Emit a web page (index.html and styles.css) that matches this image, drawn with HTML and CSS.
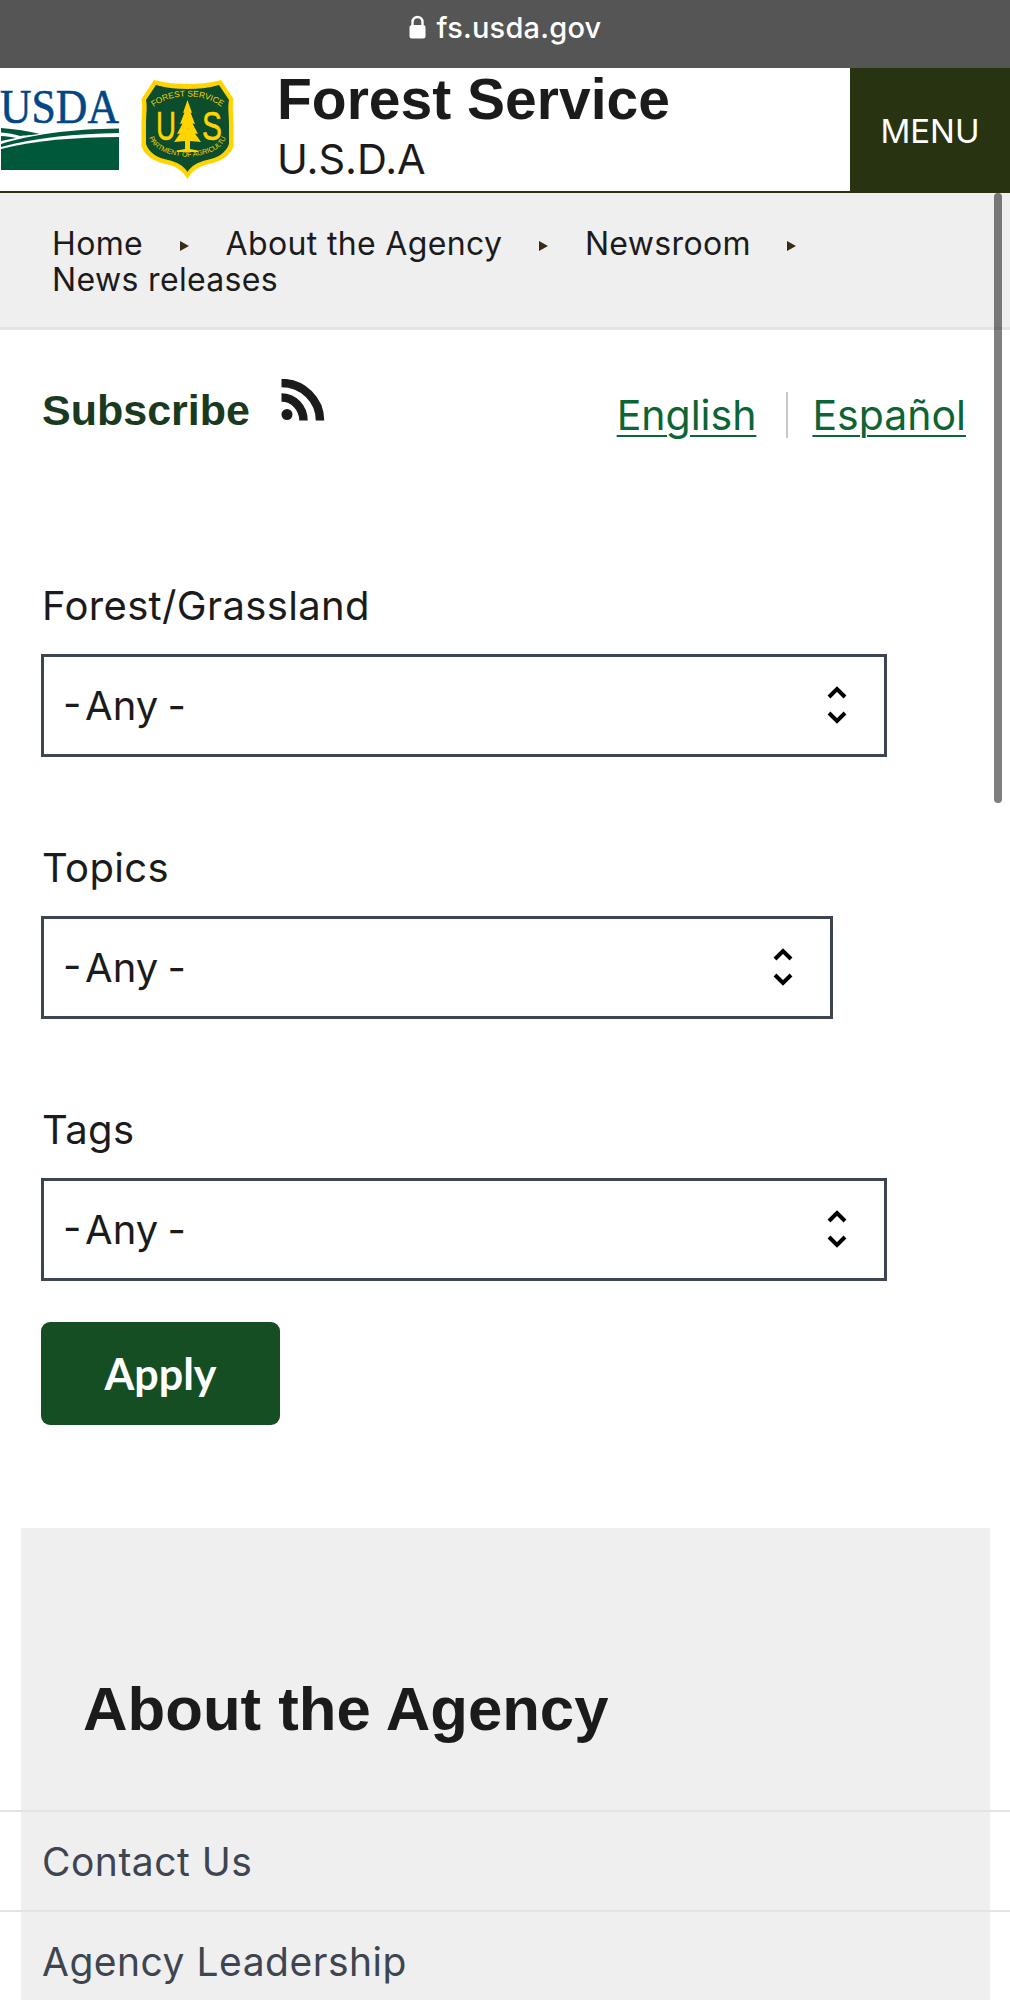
FILE: index.html
```html
<!DOCTYPE html>
<html lang="en">
<head>
<meta charset="utf-8">
<title>News releases | US Forest Service</title>
<link rel="stylesheet" href="styles.css">
</head>
<body>
<div class="page">
  <div class="urlbar">
    <svg class="lock" viewBox="0 0 17 24" aria-hidden="true"><path d="M3.5 11V7a5 5 0 0 1 10 0v4" fill="none" stroke="#fff" stroke-width="2.4"/><rect x="0.5" y="10" width="16" height="13.5" rx="2.5" fill="#fff"/></svg>
    <span>fs.usda.gov</span>
  </div>

  <header class="site-header">
    <svg class="usda" viewBox="0 0 120 82" aria-label="USDA">
      <text x="0" y="35" class="usda-text" textLength="119" lengthAdjust="spacingAndGlyphs">USDA</text>
      <path fill="#00583a" d="M1 61C35 52 75 49.5 119 49V82H1Z"/>
      <path fill="#00583a" d="M119 40.5V45C75 45.5 35 50 1 59V56C30 47 70 41 119 40.5Z"/>
      <path fill="#00583a" d="M1 40C15 41 28 43 40 46C30 47 25 47.5 20 48C14 46 8 45 1 44.5Z"/>
      <path fill="#00583a" d="M1 48C6 48 12 49 16 50C11 51 6 52 1 53Z"/>
    </svg>
    <svg class="shield" viewBox="0 0 93 99" aria-label="Forest Service shield">
      <path fill="#ffd400" d="M13 0C25 3 36 4 46.500 4C57 4 68 3 80 0L92.500 19C91 24 92.500 35 92.500 45C92.500 52 92.500 60 92.500 66C90 75 80 82 68 84C58 86 51 91 46.500 99C42 91 35 86 25 84C13 82 3 75 .5 66C.5 60 .5 52 .5 45C.5 35 2 24 .5 19Z"/>
      <path fill="#0b4d2c" d="M15 5C26 8 36 9 46.500 9C57 9 67 8 78 5L88 20C86.500 26 88 36 88 45C88 52 88 59 88 64C85 73 76 78 66 80C57 82 50 86 46.500 92C43 86 36 82 27 80C17 78 8 73 5 64C5 59 5 52 5 45C5 36 6.500 26 5 20Z"/>
      <defs>
        <path id="arc-top" d="M10 29C22 19 34 16.500 46.500 16.500C59 16.500 71 19 83 29"/>
        <path id="arc-bottom" d="M8 56C10 68 24 75 46.500 77C69 75 83 68 85 56" />
      </defs>
      <text class="sh-small"><textPath href="#arc-top" startOffset="50%" text-anchor="middle">FOREST SERVICE</textPath></text>
      <text class="sh-tiny"><textPath href="#arc-bottom" startOffset="50%" text-anchor="middle">DEPARTMENT OF AGRICULTURE</textPath></text>
      <text x="15" y="60" class="sh-big" textLength="20" lengthAdjust="spacingAndGlyphs">U</text>
      <text x="61" y="60" class="sh-big" textLength="20" lengthAdjust="spacingAndGlyphs">S</text>
      <path fill="#ffd400" d="M46.500 20L51 33L49.500 32.500L54 44L51.500 43.500L57 54L54 53.500L60 62L49 61V69L57 70.500V72H36V70.500L44 69V61L33 62L39 53.500L36 54L41.500 43.500L39 44L43.500 32.500L42 33Z"/>
    </svg>
    <div class="brand">
      <div class="brand-name">Forest Service</div>
      <div class="brand-sub">U.S.D.A</div>
    </div>
    <button class="menu-btn" type="button">MENU</button>
  </header>

  <nav class="crumbs" aria-label="Breadcrumb">
    <a href="#">Home</a><i class="tri"></i>
    <a href="#">About the Agency</a><i class="tri"></i>
    <a href="#">Newsroom</a><i class="tri"></i>
    <a href="#">News releases</a>
  </nav>

  <main class="content">
    <div class="topline">
      <div class="subscribe">
        <span>Subscribe</span>
        <svg class="rss" viewBox="0 0 44 44" aria-hidden="true">
          <circle cx="6" cy="35.500" r="5.500" fill="#1b1b1b"/>
          <path d="M.5 18.500A22 23 0 0 1 22.500 41.500" fill="none" stroke="#1b1b1b" stroke-width="8.500"/>
          <path d="M.5 4A38.500 37.500 0 0 1 39 41.500" fill="none" stroke="#1b1b1b" stroke-width="8.500"/>
        </svg>
      </div>
      <div class="langs">
        <a href="#">English</a>
        <a href="#">Español</a>
      </div>
    </div>

    <form class="filters">
      <div class="field">
        <label for="f1">Forest/Grassland</label>
        <div class="select wide">
          <select id="f1"><option>-&#8202;Any -</option></select>
          <svg class="chev" viewBox="0 0 20 38" aria-hidden="true"><path d="M2 11L10 3L18 11M2 27L10 35L18 27" fill="none" stroke="#000" stroke-width="4"/></svg>
        </div>
      </div>
      <div class="field">
        <label for="f2">Topics</label>
        <div class="select narrow">
          <select id="f2"><option>-&#8202;Any -</option></select>
          <svg class="chev" viewBox="0 0 20 38" aria-hidden="true"><path d="M2 11L10 3L18 11M2 27L10 35L18 27" fill="none" stroke="#000" stroke-width="4"/></svg>
        </div>
      </div>
      <div class="field">
        <label for="f3">Tags</label>
        <div class="select wide">
          <select id="f3"><option>-&#8202;Any -</option></select>
          <svg class="chev" viewBox="0 0 20 38" aria-hidden="true"><path d="M2 11L10 3L18 11M2 27L10 35L18 27" fill="none" stroke="#000" stroke-width="4"/></svg>
        </div>
      </div>
      <button class="apply" type="button">Apply</button>
    </form>
  </main>

  <aside class="side">
    <div class="side-panel">
      <h2>About the Agency</h2>
    </div>
    <ul class="side-list">
      <li><a href="#">Contact Us</a></li>
      <li><a href="#">Agency Leadership</a></li>
    </ul>
  </aside>

  <div class="scrollthumb"></div>
</div>
</body>
</html>
```
FILE: styles.css
```css
* { box-sizing: border-box; }
html, body { margin: 0; padding: 0; background: #fff; }
body { font-family: "Inter", "Liberation Sans", sans-serif; color: #1b1b1b; }
a { color: inherit; text-decoration: none; }

.page { position: relative; width: 1010px; height: 2000px; overflow: hidden; }

.urlbar {
  height: 68px; background: #555; color: #fff;
  display: flex; justify-content: center; align-items: flex-start; gap: 11px;
  padding-top: 11px;
  font-size: 29px; line-height: 33px; font-weight: 500; letter-spacing: .2px;
}
.lock { width: 17px; height: 24px; margin-top: 4px; }

.site-header {
  height: 125px; display: flex; align-items: flex-start;
  border-bottom: 2px solid #283311; background: #fff;
}
.usda { width: 120px; height: 82px; margin-top: 20px; flex: none; overflow: visible; }
.usda-text { font-family: "Liberation Serif", serif; font-size: 49px; fill: #004785; stroke: #004785; stroke-width: .6px; }
.shield { width: 93px; height: 99px; margin: 12px 0 0 21px; flex: none; overflow: visible; }
.sh-small { font-family: "Liberation Sans", sans-serif; font-size: 8.400px; fill: #ffd400; }
.sh-tiny { font-family: "Liberation Sans", sans-serif; font-size: 7px; fill: #ffd400; }
.sh-big { font-family: "Liberation Sans", sans-serif; font-size: 40px; fill: #ffd400; stroke: #ffd400; stroke-width: .6px; }
.brand { margin-left: 43px; flex: 1; }
.brand-name { font-family: "Liberation Sans", sans-serif; font-weight: 700; font-size: 57px; line-height: 62px; color: #1b1b1b; }
.brand-sub { font-size: 41.500px; line-height: 54px; margin-top: 2px; }
.menu-btn {
  width: 160px; height: 125px; flex: none; border: 0; background: #283311; color: #fff;
  font-family: inherit; font-size: 33px; padding: 0; margin: 0;
}

.crumbs {
  height: 137px; background: #efefef; border-bottom: 3px solid #e2e4e6;
  padding: 33px 0 0 52px;
  display: flex; flex-wrap: wrap; align-items: center; align-content: flex-start;
  font-size: 32px; line-height: 36px; letter-spacing: .35px;
}
.tri {
  width: 0; height: 0; margin: 3px 37px 0 36.500px;
  border-left: 9px solid #3b2a14; border-top: 5px solid transparent; border-bottom: 5px solid transparent;
}

.content { padding: 50px 44px 0 41px; }
.topline { display: flex; justify-content: space-between; align-items: flex-start; height: 204px; }
.subscribe { display: flex; align-items: flex-start; gap: 31px; padding-left: 1px; }
.subscribe span { font-family: "Liberation Sans", sans-serif; font-weight: 700; font-size: 43px; line-height: 50px; color: #1a3a1f; margin-top: 5px; }
.rss { width: 44px; height: 44px; margin-top: -1px; }
.langs { display: flex; font-size: 41px; line-height: 46px; color: #0b6535; padding-top: 12px; }
.langs a { text-decoration: underline; text-decoration-thickness: 2px; text-underline-offset: 5px; }
.langs a:first-child { padding-right: 30px; margin-right: 24px; border-right: 2px solid #c9c9c9; }

.field { margin-bottom: 89px; }
.field:nth-last-child(2) { margin-bottom: 41px; }
.field label { display: block; font-size: 40px; line-height: 44px; letter-spacing: .35px; margin-bottom: 26px; padding-left: 1px; }
.select { position: relative; height: 103px; }
.select.wide { width: 846px; }
.select.narrow { width: 792px; }
.select select {
  appearance: none; -webkit-appearance: none; width: 100%; height: 100%;
  border: 3px solid #3d4551; border-radius: 0; background: #fff; color: #1b1b1b;
  font-family: inherit; font-size: 40px; word-spacing: -2px; padding: 0 0 0 19px; margin: 0;
}
.chev { position: absolute; right: 40px; top: 32px; width: 20px; height: 38px; }

.apply {
  display: block; width: 239px; height: 103px;
  border: 0; border-radius: 9px; background: #164e23; color: #fff;
  font-family: "Lato", sans-serif; font-weight: 700; font-size: 43px; padding: 0;
}

.side { margin-top: 103px; position: relative; }
.side-panel { margin: 0 20px 0 21px; height: 282px; background: #efefef; padding: 145px 0 0 62px; }
.side-panel h2 { margin: 0; font-family: "Liberation Sans", sans-serif; font-weight: 700; font-size: 61.700px; line-height: 72px; color: #1b1b1b; }
.side-list { list-style: none; margin: 0; padding: 0; }
.side-list li { height: 100px; border-top: 2.500px solid #e2e4e6; background: linear-gradient(#efefef, #efefef) 21px 0 / 969px 100% no-repeat; padding: 26px 0 0 42px; font-size: 39px; line-height: 48px; letter-spacing: .5px; color: #3d4551; }

.scrollthumb { position: absolute; right: 8px; top: 193px; width: 8px; height: 610px; border-radius: 4px; background: rgba(0,0,0,.5); }
```
